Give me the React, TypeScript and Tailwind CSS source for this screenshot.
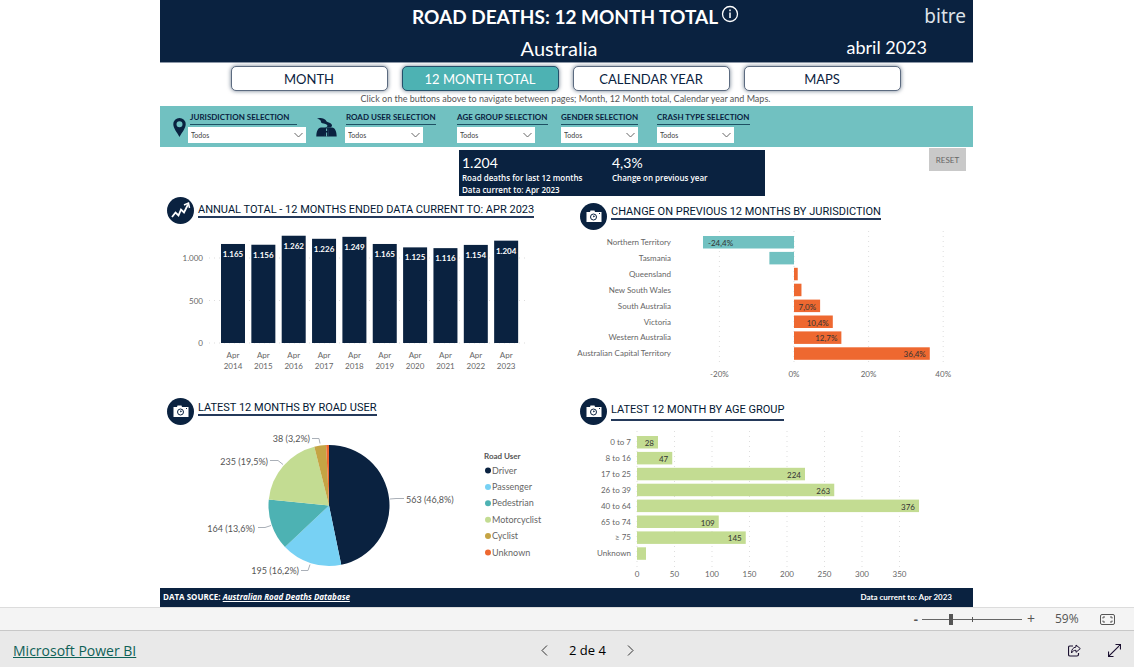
import { useState, type ReactNode } from "react"

const NAVY = "#0a2240"
const ORANGE = "#ee6830"
const TEAL = "#71c1c1"
const GREEN = "#c3dc92"

const pages = ["MONTH", "12 MONTH TOTAL", "CALENDAR YEAR", "MAPS"]

const annual = [
  { year: 2014, value: 1165 },
  { year: 2015, value: 1156 },
  { year: 2016, value: 1262 },
  { year: 2017, value: 1226 },
  { year: 2018, value: 1249 },
  { year: 2019, value: 1165 },
  { year: 2020, value: 1125 },
  { year: 2021, value: 1116 },
  { year: 2022, value: 1154 },
  { year: 2023, value: 1204 },
]

const changes = [
  { name: "Northern Territory", value: -24.4, label: "-24,4%" },
  { name: "Tasmania", value: -6.6 },
  { name: "Queensland", value: 1 },
  { name: "New South Wales", value: 2 },
  { name: "South Australia", value: 7, label: "7,0%" },
  { name: "Victoria", value: 10.4, label: "10,4%" },
  { name: "Western Australia", value: 12.7, label: "12,7%" },
  { name: "Australian Capital Territory", value: 36.4, label: "36,4%" },
]

const ages = [
  { name: "0 to 7", value: 28 },
  { name: "8 to 16", value: 47 },
  { name: "17 to 25", value: 224 },
  { name: "26 to 39", value: 263 },
  { name: "40 to 64", value: 376 },
  { name: "65 to 74", value: 109 },
  { name: "≥ 75", value: 145 },
  { name: "Unknown", value: 12 },
]

const users = [
  { name: "Driver", value: 563, color: NAVY },
  { name: "Passenger", value: 195, color: "#77d1f4" },
  { name: "Pedestrian", value: 164, color: "#4db2b3" },
  { name: "Motorcyclist", value: 235, color: GREEN },
  { name: "Cyclist", value: 38, color: "#c5a444" },
  { name: "Unknown", value: 9, color: ORANGE },
]

export default function App() {
  return (
    <div className="flex min-h-screen flex-col bg-white font-['Lato',sans-serif] text-[#0a2240]">
      <main className="mx-auto w-full max-w-[814px] grow pr-px">
        <Header />
        <Navigation />
        <Filters />
        <Summary />
        <div className="grid grid-cols-[407fr_406fr]">
          <section>
            <Heading
              icon={<TrendIcon />}
              title="ANNUAL TOTAL - 12 MONTHS ENDED DATA CURRENT TO: APR 2023"
              titleClass="h-[21px]"
            />
            <AnnualChart />
          </section>
          <section>
            <Heading
              icon={<CameraIcon />}
              title="CHANGE ON PREVIOUS 12 MONTHS BY JURISDICTION"
              rowClass="pl-[13px]"
              iconClass="mt-[6px]"
              titleClass="mt-[2px] h-[21px]"
            />
            <ChangeChart />
          </section>
          <section>
            <Heading
              icon={<CameraIcon />}
              title="LATEST 12 MONTHS BY ROAD USER"
              iconClass="mt-[3px]"
              titleClass="h-[21px]"
            />
            <UserChart />
          </section>
          <section>
            <Heading
              icon={<CameraIcon />}
              title="LATEST 12 MONTH BY AGE GROUP"
              rowClass="pl-[13px]"
              iconClass="mt-[3px]"
              titleClass="mt-[2px] h-[24px]"
            />
            <AgeChart />
          </section>
        </div>
        <footer className="flex h-[19px] items-center justify-between bg-[#0a2240] pr-[21px] pb-px pl-[3px] text-[8px] font-bold text-white">
          <p className="font-['Open_Sans',sans-serif]">
            DATA SOURCE:{" "}
            <a href="#source" className="italic underline">
              Australian Road Deaths Database
            </a>
          </p>
          <p>Data current to: Apr 2023</p>
        </footer>
      </main>
      <ZoomBar />
      <StatusBar />
    </div>
  )
}

function Header() {
  return (
    <header className="h-[63px] border-b border-[#8d98a8] bg-[#0a2240] text-white">
      <div className="grid h-[33px] grid-cols-[1fr_auto_1fr] items-center pr-[7px] pl-[25px]">
        <div />
        <div className="flex items-start gap-[3px]">
          <h1 className="text-[19px] leading-6 font-bold">ROAD DEATHS: 12 MONTH TOTAL</h1>
          <button type="button" aria-label="Information">
            <svg width="18" height="18" viewBox="0 0 18 18" fill="none" stroke="white">
              <circle cx="9" cy="9" r="7.5" strokeWidth="1.3" />
              <path d="M9 7.5V13M9 4.6V6.2" strokeWidth="1.5" />
            </svg>
          </button>
        </div>
        <span className="justify-self-end font-['Noto_Sans',sans-serif] text-[19px] text-[#dde2e8]">
          bitre
        </span>
      </div>
      <div className="grid h-[29px] grid-cols-[1fr_auto_1fr] items-center pr-[15px]">
        <div />
        <h2 className="text-[20px] leading-[26px]">Australia</h2>
        <span className="mr-[31px] justify-self-end text-[18px]">abril 2023</span>
      </div>
    </header>
  )
}

function Navigation() {
  const [page, setPage] = useState("12 MONTH TOTAL")

  return (
    <nav className="flex h-[43px] flex-col items-center pt-[3px] pr-[2px]">
      <div className="flex gap-[14px]">
        {pages.map((name) => (
          <button
            key={name}
            type="button"
            onClick={() => setPage(name)}
            className={
              name === page
                ? "h-[25px] w-[157px] rounded-[5px] border border-[#24506a] bg-[#4db2b3] pt-px text-[13px] leading-none text-white shadow-[0_0_4px_#0a224099]"
                : "h-[25px] w-[157px] rounded-[5px] border border-[#5c6b80] bg-white pt-px text-[13px] leading-none shadow-[0_0_4px_#0a224099]"
            }
          >
            {name}
          </button>
        ))}
      </div>
      <p className="mt-[2px] text-[9px] leading-[12px] text-[#555]">
        Click on the buttons above to navigate between pages; Month, 12 Month total, Calendar year and Maps.
      </p>
    </nav>
  )
}

function Filters() {
  return (
    <form className="flex h-[41px] items-start bg-[#71c1c1] pt-[5px]">
      <svg className="mt-[7px] ml-[13px] h-[19px] w-[13px]" viewBox="0 0 13 19" fill={NAVY}>
        <path
          fillRule="evenodd"
          d="M6.5 0A6.2 6.2 0 0 0 .3 6.2C.3 10.5 4 14 6.5 19 9 14 12.7 10.5 12.7 6.2A6.2 6.2 0 0 0 6.5 0ZM6.5 3.2a3 3 0 1 1 0 6 3 3 0 0 1 0-6Z"
        />
      </svg>
      <Filter
        id="jurisdiction"
        label="JURISDICTION SELECTION"
        groupClass="ml-[2px] w-[118px]"
        labelClass="ml-[2px] w-[107px]"
        selectClass="w-full"
      />
      <svg className="mt-[7px] ml-[10px] h-[19px] w-[21px]" viewBox="0 0 21 19" fill={NAVY}>
        <path d="M1 .5C4-.5 7 0 9 1.500c1.500 1 1 2 2.500 2.500 3 .8 4.500 2 4.500 3.500 0 .8-.5 1.500-1.500 2H9.500C12 8.500 12 7 9.500 6 7 5.200 5 5.500 5 4c0-1.500-1-2.500-4-3.500Z" />
        <path d="M5 9.500h4.300L8.800 18.500H.3C.3 13.500 2 9.500 5 9.500ZM12 9.500h4c3 0 4.700 4 4.700 9h-8.200Z" />
        <path d="M9 9.500h3.200l.5 9h-4Z" />
        <path d="M10.600 10.500v2.500M10.600 14.500v4" stroke={TEAL} />
      </svg>
      <Filter
        id="roadUser"
        label="ROAD USER SELECTION"
        groupClass="ml-[8px] w-[91px]"
        labelClass="ml-px"
        selectClass="w-[78px]"
      />
      <Filter id="ageGroup" label="AGE GROUP SELECTION" groupClass="ml-[21px] w-[91px]" selectClass="w-[78px]" />
      <Filter id="gender" label="GENDER SELECTION" groupClass="ml-[13px] w-[77px]" selectClass="w-[77px]" />
      <Filter id="crashType" label="CRASH TYPE SELECTION" groupClass="ml-[19px] w-[93px]" selectClass="w-[77px]" />
    </form>
  )
}

interface FilterProps {
  id: string
  label: string
  groupClass: string
  labelClass?: string
  selectClass: string
}

function Filter({ id, label, groupClass, labelClass = "", selectClass }: FilterProps) {
  return (
    <div className={`flex flex-col gap-[2px] ${groupClass}`}>
      <label
        htmlFor={id}
        className={`h-[14px] border-b border-[#1e5063] text-[8px] leading-[13px] font-bold whitespace-nowrap ${labelClass}`}
      >
        {label}
      </label>
      <div className={`relative ${selectClass}`}>
        <select
          id={id}
          className="block h-[16px] w-full appearance-none bg-white pl-[3px] text-[7px] leading-none text-[#444]"
        >
          <option>Todos</option>
        </select>
        <svg
          className="pointer-events-none absolute top-[5px] right-[3px]"
          width="9"
          height="6"
          viewBox="0 0 9 6"
          fill="none"
          stroke="#666"
        >
          <path d="M.5 1l4 4 4-4" />
        </svg>
      </div>
    </div>
  )
}

function Summary() {
  return (
    <div className="flex h-[50px] items-start justify-between pr-[7px] pl-[299px]">
      <dl className="mt-[3px] grid h-[46px] w-[306px] grid-cols-[150px_1fr] bg-[#0a2240] pt-[4px] pl-[3px] text-white">
        <div>
          <dd className="text-[14px] leading-[18px]">1.204</dd>
          <dt className="font-['Open_Sans',sans-serif] text-[8px] leading-[12px] font-semibold whitespace-nowrap">
            Road deaths for last 12 months
            <br />
            Data current to: Apr 2023
          </dt>
        </div>
        <div>
          <dd className="text-[14px] leading-[18px]">4,3%</dd>
          <dt className="font-['Open_Sans',sans-serif] text-[8px] leading-[12px] font-semibold whitespace-nowrap">
            Change on previous year
          </dt>
        </div>
      </dl>
      <button type="button" className="mt-px h-[23px] w-[37px] bg-[#c9c9c9] text-[8px] text-[#666]">
        RESET
      </button>
    </div>
  )
}

interface HeadingProps {
  icon: ReactNode
  title: string
  rowClass?: string
  iconClass?: string
  titleClass?: string
}

function Heading({ icon, title, rowClass = "pl-[7px]", iconClass = "", titleClass = "" }: HeadingProps) {
  return (
    <div className={`flex h-[33px] items-start gap-[4px] ${rowClass}`}>
      <span className={`flex size-[27px] shrink-0 items-center justify-center rounded-full bg-[#0a2240] ${iconClass}`}>
        {icon}
      </span>
      <h3
        className={`border-b-2 border-[#24395a] pt-[4px] font-['Roboto',sans-serif] text-[11px] leading-[17px] font-normal whitespace-nowrap text-[#041833] ${titleClass}`}
      >
        {title}
      </h3>
    </div>
  )
}

function TrendIcon() {
  return (
    <svg width="21" height="21" viewBox="0 0 21 21" fill="none" stroke="white" strokeWidth="1.8">
      <path d="M2 17l3.500-4.500L8.500 15.500 11 9.500l3 3L18 4.500" />
      <path d="M14 5l4.500-2 1 5" strokeWidth="1.500" />
    </svg>
  )
}

function CameraIcon() {
  return (
    <svg width="16" height="13" viewBox="0 0 16 13">
      <path d="M.5 2H4L4.500.5h4L9 2h6.500v10H.5Z" fill="white" />
      <circle cx="7.500" cy="7" r="3" fill="none" stroke={NAVY} />
      <path d="M7.500 5.500v1.500L9 6" stroke={NAVY} strokeWidth=".8" fill="none" />
      <path d="M13 3.500h1" stroke={NAVY} />
    </svg>
  )
}

function AnnualChart() {
  return (
    <svg viewBox="0 0 407 165" className="block w-full text-[8px]" dominantBaseline="central">
      {[0, 500, 1000].map((tick) => (
        <g key={tick}>
          <line x1="49" x2="368" y1={113 - tick * 0.085} y2={113 - tick * 0.085} stroke="#ddd" strokeDasharray="1 4" />
          <text x="43" y={113 - tick * 0.085} textAnchor="end" fill="#666">
            {tick === 1000 ? "1.000" : tick}
          </text>
        </g>
      ))}
      {annual.map(({ year, value }, i) => {
        const center = 73 + i * 30.35
        const height = value * 0.085
        return (
          <g key={year} textAnchor="middle">
            <rect x={center - 12} y={113 - height} width="24" height={height} fill={NAVY} />
            <text x={center} y={123 - height} fill="white" fontWeight="bold">
              {"1." + (value - 1000)}
            </text>
            <text x={center} y="125" fill="#666">
              Apr
            </text>
            <text x={center} y="136" fill="#666">
              {year}
            </text>
          </g>
        )
      })}
    </svg>
  )
}

function ChangeChart() {
  return (
    <svg viewBox="0 0 406 165" className="block w-full text-[8px]" dominantBaseline="central">
      {[-20, 0, 20, 40].map((tick) => (
        <g key={tick}>
          <line x1={227 + tick * 3.73} x2={227 + tick * 3.73} y1="1" y2="136" stroke="#ddd" strokeDasharray="1 4" />
          <text x={227 + tick * 3.73} y="144" textAnchor="middle" fill="#666">
            {tick}%
          </text>
        </g>
      ))}
      {changes.map(({ name, value, label }, i) => {
        const width = Math.abs(value) * 3.73
        const y = 6 + i * 15.9
        return (
          <g key={name}>
            <text x="104" y={y + 6} textAnchor="end" fill="#666">
              {name}
            </text>
            <rect
              x={value < 0 ? 227 - width : 227}
              y={y}
              width={width}
              height="12.5"
              fill={value < 0 ? TEAL : ORANGE}
            />
            {label && (
              <text
                x={value < 0 ? 232 - width : 223 + width}
                y={y + 7}
                textAnchor={value < 0 ? "start" : "end"}
                fill="#333"
              >
                {label}
              </text>
            )}
          </g>
        )
      })}
    </svg>
  )
}

function UserChart() {
  const total = users.reduce((sum, user) => sum + user.value, 0)
  const point = (share: number) => {
    const angle = share * 2 * Math.PI
    return `${169 + 60.5 * Math.sin(angle)} ${77.5 - 60.5 * Math.cos(angle)}`
  }
  let sum = 0

  return (
    <svg viewBox="0 0 407 160" className="block w-full text-[9px]" dominantBaseline="central">
      {users.map(({ name, value, color }) => {
        const from = sum / total
        sum += value
        return (
          <path key={name} d={`M169 77.5L${point(from)}A60.5 60.5 0 0 1 ${point(sum / total)}Z`} fill={color} />
        )
      })}
      <g fill="none" stroke="#aab0b8">
        <path d="M152 10.5h7l1 5" />
        <path d="M110 32.5h8l5 4" />
        <path d="M98 99.5h7l6-2" />
        <path d="M141 142.5h7l2-6" />
        <path d="M230 71l6-.5h8" />
      </g>
      <g fill="#555">
        <text x="150" y="10" textAnchor="end">
          38 (3,2%)
        </text>
        <text x="108" y="33" textAnchor="end">
          235 (19,5%)
        </text>
        <text x="95" y="100" textAnchor="end">
          164 (13,6%)
        </text>
        <text x="139" y="142" textAnchor="end">
          195 (16,2%)
        </text>
        <text x="246" y="71">
          563 (46,8%)
        </text>
      </g>
      <text x="324" y="28" fontWeight="bold" fill="#555" className="text-[8px]">
        Road User
      </text>
      {users.map(({ name, color }, i) => (
        <g key={name}>
          <circle cx="328" cy={42.5 + i * 16.4} r="3" fill={color} />
          <text x="332" y={42 + i * 16.4} fill="#666">
            {name}
          </text>
        </g>
      ))}
    </svg>
  )
}

function AgeChart() {
  return (
    <svg viewBox="0 0 406 160" className="block w-full text-[8px]" dominantBaseline="central">
      {[0, 50, 100, 150, 200, 250, 300, 350].map((tick) => (
        <g key={tick}>
          <line x1={70 + tick * 0.75} x2={70 + tick * 0.75} y1="3" y2="139" stroke="#ddd" strokeDasharray="1 4" />
          <text x={70 + tick * 0.75} y="146" textAnchor="middle" fill="#666">
            {tick}
          </text>
        </g>
      ))}
      {ages.map(({ name, value }, i) => (
        <g key={name} textAnchor="end">
          <text x="64" y={14 + i * 15.9} fill="#666">
            {name}
          </text>
          <rect x="70" y={8 + i * 15.9} width={value * 0.75} height="12.5" fill={GREEN} />
          {value > 12 && (
            <text x={66 + value * 0.75} y={15 + i * 15.9} fill="#333">
              {value}
            </text>
          )}
        </g>
      ))}
    </svg>
  )
}

function ZoomBar() {
  const [zoom, setZoom] = useState(59)

  return (
    <div className="flex h-[23px] items-center justify-end border-t border-[#dcdcdc] bg-[#f4f4f4] pr-[19px] font-['Open_Sans',sans-serif] text-[#555]">
      <button
        type="button"
        aria-label="Zoom out"
        onClick={() => setZoom(zoom - 10)}
        className="text-[13px] leading-none font-bold"
      >
        -
      </button>
      <div className="relative ml-[4px] flex items-center">
        <input
          type="range"
          aria-label="Zoom"
          min="30"
          max="134"
          value={zoom}
          onChange={(event) => setZoom(Number(event.target.value))}
          className="h-[12px] w-[100px] appearance-none bg-[linear-gradient(#666,#666)] bg-[length:100%_1px] bg-center bg-no-repeat [&::-webkit-slider-thumb]:h-[11px] [&::-webkit-slider-thumb]:w-[4px] [&::-webkit-slider-thumb]:appearance-none [&::-webkit-slider-thumb]:bg-[#555]"
        />
        <span className="pointer-events-none absolute left-1/2 h-[5px] w-px bg-[#555]" />
      </div>
      <button
        type="button"
        aria-label="Zoom in"
        onClick={() => setZoom(zoom + 10)}
        className="ml-[5px] text-[14px] leading-none"
      >
        +
      </button>
      <span className="ml-[20px] w-[24px] text-[12px] leading-none">{zoom}%</span>
      <button type="button" aria-label="Fit to page" className="ml-[21px]">
        <svg width="15" height="11" viewBox="0 0 15 11" fill="none" stroke="#555">
          <rect x=".5" y=".5" width="14" height="10" rx="1.5" />
          <path d="M5 3H3v1.500M10 3h2v1.500M5 8H3V6.500M10 8h2V6.500" />
        </svg>
      </button>
    </div>
  )
}

function StatusBar() {
  return (
    <div className="grid h-[37px] grid-cols-[1fr_auto_1fr] items-center border-t border-[#c8c8c8] bg-[#e9e9e9] px-[13px] pt-[3px] font-['Open_Sans',sans-serif]">
      <a href="#powerbi" className="justify-self-start text-[14px] text-[#0f6157] underline">
        Microsoft Power BI
      </a>
      <div className="flex items-center gap-[21px] pl-[41px] text-black">
        <button type="button" aria-label="Previous page">
          <svg width="7" height="11" viewBox="0 0 7 11" fill="none" stroke="#333">
            <path d="M6 .5l-5 5 5 5" />
          </svg>
        </button>
        <span className="text-[13px]">2 de 4</span>
        <button type="button" aria-label="Next page">
          <svg width="7" height="11" viewBox="0 0 7 11" fill="none" stroke="#333">
            <path d="M1 .5l5 5-5 5" />
          </svg>
        </button>
      </div>
      <div className="flex items-center gap-[27px] justify-self-end">
        <button type="button" aria-label="Share">
          <svg width="13" height="13" viewBox="0 0 13 13" fill="none" stroke="#1b1030">
            <path d="M5 2H2Q.5 2 .5 3.500v7Q.5 12 2 12h7q1.500 0 1.500-1.500V9" strokeWidth="1.200" />
            <path d="M8 1v2C5 3.500 3.500 5.500 3.500 9 4.500 7 6 6.300 8 6.300v2L12.300 4.600Z" />
          </svg>
        </button>
        <button type="button" aria-label="Full screen">
          <svg width="13" height="13" viewBox="0 0 13 13" fill="none" stroke="#1b1030">
            <path d="M.8 12.200 12.200.8M7.500.5h5v5M.5 7.500v5h5" strokeWidth="1.200" />
          </svg>
        </button>
      </div>
    </div>
  )
}
